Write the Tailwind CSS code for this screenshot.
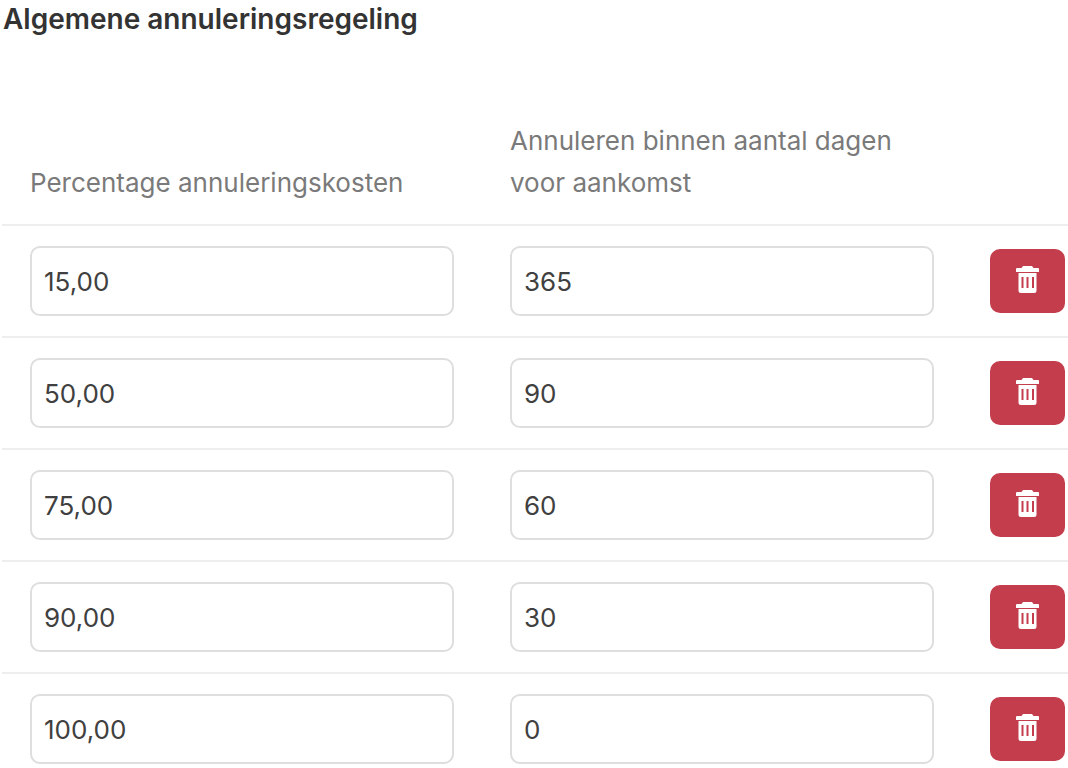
<!DOCTYPE html>
<html lang="nl">
<head>
<meta charset="utf-8">
<script src="https://cdn.jsdelivr.net/npm/@tailwindcss/browser@4"></script>
<title>Annuleringsregeling</title>
</head>
<body class="bg-white font-['Inter',sans-serif] text-[26px] text-[#404040]">
<main class="h-[768px] w-[1068px] overflow-hidden pl-[2px]">
  <h2 class="pt-[1px] pl-[1px] h-[120px] text-[28px] leading-[36px] font-semibold text-[#333333]">Algemene annuleringsregeling</h2>
  <div class="grid grid-cols-[480px_480px_1fr] h-[106px] border-b-2 border-[#eeeeee] text-[#7a7a7a] leading-[42px]">
    <div class="pl-[28px] pt-[42px]">Percentage annuleringskosten</div>
    <div class="pl-[28px] pr-[20px]">Annuleren binnen aantal dagen voor aankomst</div>
    <div></div>
  </div>

  <div class="grid grid-cols-[480px_480px_1fr] items-center h-[112px] border-b-2 border-[#eeeeee]">
    <div class="px-[28px]"><div class="flex items-center h-[70px] border-2 border-[#dedede] rounded-[10px] pl-[12px]">15,00</div></div>
    <div class="px-[28px]"><div class="flex items-center h-[70px] border-2 border-[#dedede] rounded-[10px] pl-[12px]">365</div></div>
    <div class="pl-[28px]"><button class="flex items-center justify-center w-[75px] h-[64px] rounded-[10px] bg-[#c43d4c] pb-[3px]"><svg class="w-[23px] h-[27px]" viewBox="0 0 23 27" fill="white"><path fill-rule="evenodd" d="M7 0h9l1.500 2H22a1 1 0 0 1 1 1v2.500a.5.5 0 0 1-.5.5H.5a.5.5 0 0 1-.5-.5V3a1 1 0 0 1 1-1h4.500L7 0ZM2.500 7h18v17.500a2.500 2.500 0 0 1-2.500 2.500H5a2.500 2.500 0 0 1-2.500-2.500V7ZM5.500 11v11h2V11h-2Zm5 0v11h2V11h-2Zm5.500 0v11h2V11h-2Z"/></svg></button></div>
  </div>

  <div class="grid grid-cols-[480px_480px_1fr] items-center h-[112px] border-b-2 border-[#eeeeee]">
    <div class="px-[28px]"><div class="flex items-center h-[70px] border-2 border-[#dedede] rounded-[10px] pl-[12px]">50,00</div></div>
    <div class="px-[28px]"><div class="flex items-center h-[70px] border-2 border-[#dedede] rounded-[10px] pl-[12px]">90</div></div>
    <div class="pl-[28px]"><button class="flex items-center justify-center w-[75px] h-[64px] rounded-[10px] bg-[#c43d4c] pb-[3px]"><svg class="w-[23px] h-[27px]" viewBox="0 0 23 27" fill="white"><path fill-rule="evenodd" d="M7 0h9l1.500 2H22a1 1 0 0 1 1 1v2.500a.5.5 0 0 1-.5.5H.5a.5.5 0 0 1-.5-.5V3a1 1 0 0 1 1-1h4.500L7 0ZM2.500 7h18v17.500a2.500 2.500 0 0 1-2.500 2.500H5a2.500 2.500 0 0 1-2.500-2.500V7ZM5.500 11v11h2V11h-2Zm5 0v11h2V11h-2Zm5.500 0v11h2V11h-2Z"/></svg></button></div>
  </div>

  <div class="grid grid-cols-[480px_480px_1fr] items-center h-[112px] border-b-2 border-[#eeeeee]">
    <div class="px-[28px]"><div class="flex items-center h-[70px] border-2 border-[#dedede] rounded-[10px] pl-[12px]">75,00</div></div>
    <div class="px-[28px]"><div class="flex items-center h-[70px] border-2 border-[#dedede] rounded-[10px] pl-[12px]">60</div></div>
    <div class="pl-[28px]"><button class="flex items-center justify-center w-[75px] h-[64px] rounded-[10px] bg-[#c43d4c] pb-[3px]"><svg class="w-[23px] h-[27px]" viewBox="0 0 23 27" fill="white"><path fill-rule="evenodd" d="M7 0h9l1.500 2H22a1 1 0 0 1 1 1v2.500a.5.5 0 0 1-.5.5H.5a.5.5 0 0 1-.5-.5V3a1 1 0 0 1 1-1h4.500L7 0ZM2.500 7h18v17.500a2.500 2.500 0 0 1-2.500 2.500H5a2.500 2.500 0 0 1-2.500-2.500V7ZM5.500 11v11h2V11h-2Zm5 0v11h2V11h-2Zm5.500 0v11h2V11h-2Z"/></svg></button></div>
  </div>

  <div class="grid grid-cols-[480px_480px_1fr] items-center h-[112px] border-b-2 border-[#eeeeee]">
    <div class="px-[28px]"><div class="flex items-center h-[70px] border-2 border-[#dedede] rounded-[10px] pl-[12px]">90,00</div></div>
    <div class="px-[28px]"><div class="flex items-center h-[70px] border-2 border-[#dedede] rounded-[10px] pl-[12px]">30</div></div>
    <div class="pl-[28px]"><button class="flex items-center justify-center w-[75px] h-[64px] rounded-[10px] bg-[#c43d4c] pb-[3px]"><svg class="w-[23px] h-[27px]" viewBox="0 0 23 27" fill="white"><path fill-rule="evenodd" d="M7 0h9l1.500 2H22a1 1 0 0 1 1 1v2.500a.5.5 0 0 1-.5.5H.5a.5.5 0 0 1-.5-.5V3a1 1 0 0 1 1-1h4.500L7 0ZM2.500 7h18v17.500a2.500 2.500 0 0 1-2.500 2.500H5a2.500 2.500 0 0 1-2.500-2.500V7ZM5.500 11v11h2V11h-2Zm5 0v11h2V11h-2Zm5.500 0v11h2V11h-2Z"/></svg></button></div>
  </div>

  <div class="grid grid-cols-[480px_480px_1fr] items-center h-[112px] border-b-2 border-[#eeeeee]">
    <div class="px-[28px]"><div class="flex items-center h-[70px] border-2 border-[#dedede] rounded-[10px] pl-[12px]">100,00</div></div>
    <div class="px-[28px]"><div class="flex items-center h-[70px] border-2 border-[#dedede] rounded-[10px] pl-[12px]">0</div></div>
    <div class="pl-[28px]"><button class="flex items-center justify-center w-[75px] h-[64px] rounded-[10px] bg-[#c43d4c] pb-[3px]"><svg class="w-[23px] h-[27px]" viewBox="0 0 23 27" fill="white"><path fill-rule="evenodd" d="M7 0h9l1.500 2H22a1 1 0 0 1 1 1v2.500a.5.5 0 0 1-.5.5H.5a.5.5 0 0 1-.5-.5V3a1 1 0 0 1 1-1h4.500L7 0ZM2.500 7h18v17.500a2.500 2.500 0 0 1-2.500 2.500H5a2.500 2.500 0 0 1-2.500-2.500V7ZM5.500 11v11h2V11h-2Zm5 0v11h2V11h-2Zm5.500 0v11h2V11h-2Z"/></svg></button></div>
  </div>
</main>
</body>
</html>
